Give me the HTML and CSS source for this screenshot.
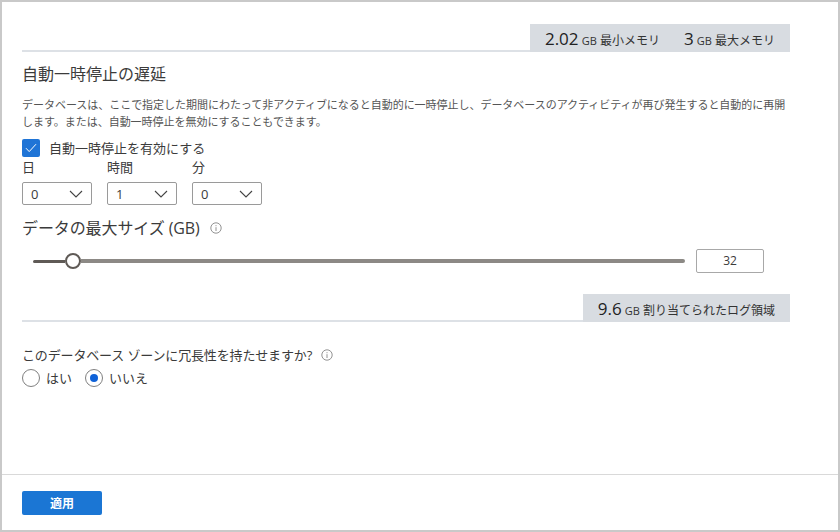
FILE: index.html
```html
<!DOCTYPE html>
<html lang="ja">
<head>
    <meta charset="UTF-8">
    <title>自動一時停止の遅延</title>
    <link rel="stylesheet" href="styles.css">
</head>
<body>
    <div class="frame">
        <div class="content">
            <!-- Memory summary -->
            <div class="summary-row">
                <div class="summary">
                    <span class="stat"><b>2.02</b> <small>GB</small> 最小メモリ</span>
                    <span class="stat"><b>3</b> <small>GB</small> 最大メモリ</span>
                </div>
            </div>

            <h2 class="title">自動一時停止の遅延</h2>
            <p class="desc">データベースは、ここで指定した期間にわたって非アクティブになると自動的に一時停止し、データベースのアクティビティが再び発生すると自動的に再開します。または、自動一時停止を無効にすることもできます。</p>

            <label class="check">
                <span class="checkbox">
                    <svg width="12" height="10" viewBox="0 0 12 10"><path d="M1 5.2 L4.2 8.6 L11 1.2" fill="none" stroke="#fff" stroke-width="1"/></svg>
                </span>
                自動一時停止を有効にする
            </label>

            <div class="delay">
                <div class="field">
                    <div class="field-label">日</div>
                    <div class="select">0<svg class="chevron" width="14" height="8" viewBox="0 0 14 8"><path d="M1 1 L7 7 L13 1" fill="none" stroke="#444" stroke-width="1.1"/></svg></div>
                </div>
                <div class="field">
                    <div class="field-label">時間</div>
                    <div class="select">1<svg class="chevron" width="14" height="8" viewBox="0 0 14 8"><path d="M1 1 L7 7 L13 1" fill="none" stroke="#444" stroke-width="1.1"/></svg></div>
                </div>
                <div class="field">
                    <div class="field-label">分</div>
                    <div class="select">0<svg class="chevron" width="14" height="8" viewBox="0 0 14 8"><path d="M1 1 L7 7 L13 1" fill="none" stroke="#444" stroke-width="1.1"/></svg></div>
                </div>
            </div>

            <h2 class="title size-title">データの最大サイズ (GB)
                <svg class="info" width="12" height="12" viewBox="0 0 12 12"><circle cx="6" cy="6" r="5.2" fill="none" stroke="#777" stroke-width="0.8"/><path d="M6 5.2 V9 M6 3.2 V4.2" stroke="#777" stroke-width="0.8"/></svg>
            </h2>

            <div class="slider-row">
                <div class="slider">
                    <div class="track-done"></div>
                    <div class="thumb"></div>
                    <div class="track-rest"></div>
                </div>
                <div class="size-input">32</div>
            </div>

            <!-- Log space summary -->
            <div class="summary-row log-row">
                <div class="summary">
                    <span class="stat"><b>9.6</b> <small>GB</small> 割り当てられたログ領域</span>
                </div>
            </div>

            <div class="question">このデータベース ゾーンに冗長性を持たせますか?
                <svg class="info" width="12" height="12" viewBox="0 0 12 12"><circle cx="6" cy="6" r="5.2" fill="none" stroke="#777" stroke-width="0.8"/><path d="M6 5.2 V9 M6 3.2 V4.2" stroke="#777" stroke-width="0.8"/></svg>
            </div>
            <div class="radios">
                <label class="radio-item"><span class="radio"></span>はい</label>
                <label class="radio-item"><span class="radio on"></span>いいえ</label>
            </div>
        </div>

        <div class="footer">
            <button class="apply">適用</button>
        </div>
    </div>
</body>
</html>
```

FILE: styles.css
```css
/* Global Styles */
html, body {
    margin: 0;
    height: 100%;
}

body {
    font-family: "Open Sans", "Noto Sans CJK JP", sans-serif;
    color: #3b3b3b;
    background-color: #ffffff;
}

/* Frame */
.frame {
    box-sizing: border-box;
    height: 532px;
    display: flex;
    flex-direction: column;
    border: 2px solid #c9c9c9;
}

.content {
    flex: 1;
    padding: 22px 48px 0 20px;
}

/* Summary bands */
.summary-row {
    display: flex;
    justify-content: flex-end;
    height: 28px;
    border-bottom: 2px solid #dde1e6;
    box-sizing: border-box;
}

.summary {
    height: 28px;
    display: flex;
    align-items: center;
    gap: 24px;
    padding: 0 15px;
    background-color: #d8dce1;
    color: #333333;
    font-size: 12px;
    white-space: nowrap;
}

.summary b {
    font-size: 17px;
    font-weight: 400;
    color: #222222;
}

.summary small {
    font-size: 11px;
}

.log-row {
    margin-top: 21px;
}

/* Headings and text */
.title {
    margin: 10px 0 0;
    font-size: 16px;
    font-weight: 400;
    line-height: 24px;
}

.desc {
    margin: 10px 0 0;
    font-size: 11px;
    line-height: 17px;
    letter-spacing: -0.03px;
    color: #555555;
}

/* Checkbox */
.check {
    display: flex;
    align-items: center;
    gap: 9px;
    margin-top: 9px;
    font-size: 13px;
    line-height: 18px;
}

.checkbox {
    width: 18px;
    height: 18px;
    display: flex;
    align-items: center;
    justify-content: center;
    border-radius: 2px;
    background-color: #1f74d6;
}

/* Delay selects */
.delay {
    display: flex;
    gap: 15px;
    margin-top: 1px;
}

.field-label {
    font-size: 13px;
    line-height: 18px;
    margin-bottom: 6px;
}

.select {
    box-sizing: border-box;
    width: 70px;
    height: 23px;
    display: flex;
    align-items: center;
    justify-content: space-between;
    padding: 0 8px 0 8px;
    border: 1px solid #9a9a9a;
    border-radius: 2px;
    font-size: 13px;
}

/* Size slider */
.size-title {
    margin-top: 11px;
    display: flex;
    align-items: center;
    gap: 10px;
    letter-spacing: -0.1px;
}

.info {
    flex: none;
}

.slider-row {
    display: flex;
    align-items: center;
    margin-top: 9px;
    padding-left: 11px;
    width: 742px;
    box-sizing: border-box;
}

.slider {
    width: 652px;
    display: flex;
    align-items: center;
}

.track-done {
    width: 32px;
    height: 3px;
    background-color: #5f5a56;
    border-radius: 2px 0 0 2px;
}

.thumb {
    box-sizing: border-box;
    flex: none;
    width: 16px;
    height: 16px;
    border: 2px solid #5f5a56;
    border-radius: 50%;
    background-color: #ffffff;
}

.track-rest {
    flex: 1;
    height: 4px;
    background-color: #8c8985;
    border-radius: 0 2px 2px 0;
}

.size-input {
    box-sizing: border-box;
    width: 68px;
    height: 24px;
    margin-left: 11px;
    border: 1px solid #a8a8a8;
    border-radius: 2px;
    text-align: center;
    font-size: 12px;
    line-height: 22px;
}

/* Redundancy question */
.question {
    display: flex;
    align-items: center;
    gap: 9px;
    margin-top: 23px;
    font-size: 13px;
    line-height: 20px;
    letter-spacing: -0.15px;
}

.radios {
    display: flex;
    gap: 13px;
    margin-top: 4px;
}

.radio-item {
    display: flex;
    align-items: center;
    gap: 6px;
    font-size: 13px;
    line-height: 18px;
}

.radio {
    box-sizing: border-box;
    width: 18px;
    height: 18px;
    display: flex;
    align-items: center;
    justify-content: center;
    border: 1px solid #808080;
    border-radius: 50%;
}

.radio.on::after {
    content: "";
    width: 8px;
    height: 8px;
    border-radius: 50%;
    background-color: #0f62d8;
}

/* Footer */
.footer {
    height: 56px;
    padding: 16px 20px 0;
    box-sizing: border-box;
    border-top: 1px solid #d9d9d9;
}

.apply {
    display: block;
    width: 80px;
    height: 24px;
    padding: 0;
    border: 0;
    border-radius: 2px;
    background-color: #1b76d4;
    color: #ffffff;
    font-family: inherit;
    font-size: 12px;
    font-weight: 700;
}
```
